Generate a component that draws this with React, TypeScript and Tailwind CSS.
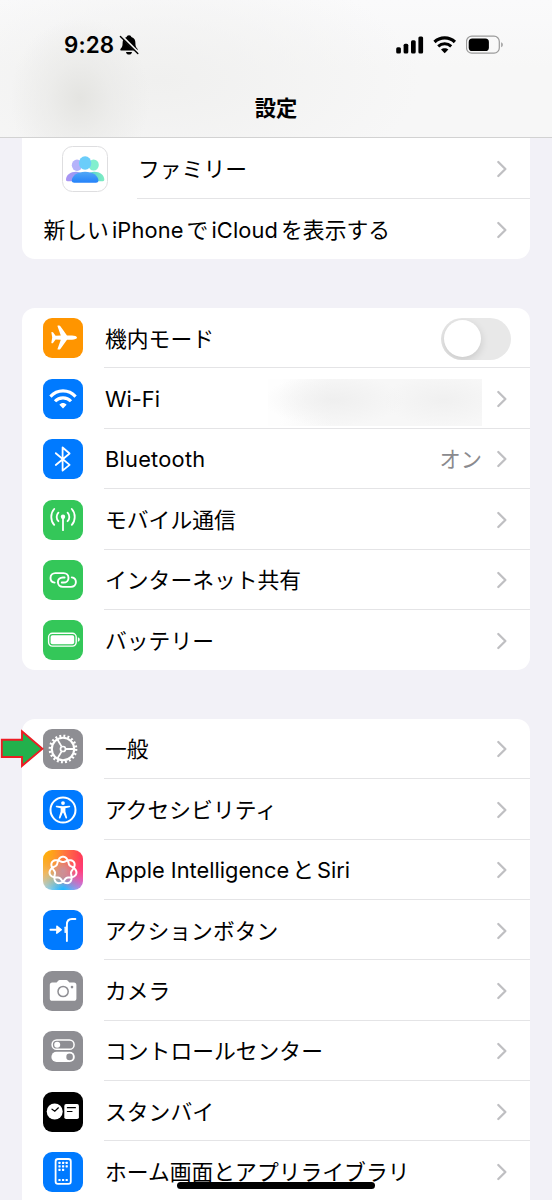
import type { ReactNode } from "react";

type Row = {
  label: ReactNode;
  bg?: string;
  icon?: ReactNode;
  right?: ReactNode;
};

// Rosette of seven interlaced petals, traced over two turns
const rosette = (cx: number, cy: number) => {
  const points: string[] = [];
  for (let i = 0; i < 280; i++) {
    const t = (i / 280) * Math.PI * 4;
    const r = 11 + 2.7 * Math.cos(3.5 * t);
    points.push(`${(cx + r * Math.sin(t)).toFixed(2)} ${(cy - r * Math.cos(t)).toFixed(2)}`);
  }
  return `M${points.join("L")}Z`;
};

const Chevron = () => (
  <svg className="w-[12px] h-[18px] shrink-0" viewBox="0 0 12 18" fill="none">
    <path d="M2.3 2L9.4 9L2.3 16" stroke="#bfbfc2" strokeWidth="2.3" strokeLinecap="round" strokeLinejoin="round" />
  </svg>
);

const Toggle = () => (
  <div className="w-[70px] h-[42px] -mr-[3px] rounded-full bg-[#e8e8e8] flex items-center pl-[2.5px] overflow-hidden">
    <div className="w-[37.5px] h-[37.5px] rounded-full bg-white shadow-[0_3px_8px_rgba(0,0,0,0.14)]" />
  </div>
);

const PlaneIcon = () => (
  <path
    fill="#fff"
    d="M34 19.6C34 18.2 31.5 17.5 29 17.5H24L17.4 8.3C17.1 7.9 16.6 7.6 16.1 7.6H15.1C14.6 7.6 14.4 8 14.6 8.5L17.8 17.5L12.6 17.8L10.2 14.5C10 14.1 9.6 13.9 9.2 13.9H8.8C8.4 13.9 8.3 14.2 8.4 14.6L9.2 19.6L8.4 24.6C8.3 25 8.4 25.3 8.8 25.3H9.2C9.6 25.3 10 25.1 10.2 24.7L12.6 21.4L17.8 21.7L14.6 30.7C14.4 31.2 14.6 31.6 15.1 31.6H16.1C16.6 31.6 17.1 31.3 17.4 30.9L24 21.7H29C31.5 21.7 34 21 34 19.6Z"
  />
);

const WifiIcon = () => (
  <g fill="none" stroke="#fff" strokeWidth="3.1">
    <path d="M7.4 17.6C14.3 10 25.7 10 32.6 17.6" />
    <path d="M12 22.2C16.3 17.7 23.7 17.7 28 22.2" />
    <path d="M16.4 25.7C18.4 23.5 21.6 23.5 23.6 25.7L20 29.6Z" fill="#fff" stroke="none" />
  </g>
);

const BluetoothIcon = () => (
  <path
    fill="none"
    stroke="#fff"
    strokeWidth="1.8"
    strokeLinejoin="round"
    strokeLinecap="round"
    d="M12.8 14.2L26.6 25.9L19.6 31.6V8.5L26.6 14.5L12.8 26"
  />
);

const AntennaIcon = () => (
  <g fill="none" stroke="#fff" strokeWidth="1.8" strokeLinecap="round">
    <path d="M20 17V30.2" />
    <circle cx="20" cy="16.8" r="2.2" fill="#fff" stroke="none" />
    <path d="M15.4 12.6C13.1 15 13.1 18.8 15.4 21.2M11.2 9C7.3 13.2 7.3 20.6 11.2 24.9" />
    <path d="M24.6 12.6C26.9 15 26.9 18.8 24.6 21.2M28.8 9C32.7 13.2 32.7 20.6 28.8 24.9" />
  </g>
);

const LinkIcon = () => (
  <g fill="none" stroke="#fff" strokeWidth="1.9" strokeLinecap="round">
    <path d="M11.6 22.6C8.8 22.2 7.5 20 7.5 17.9C7.5 15.2 9.6 13.1 12.4 13.1H20.6C23.4 13.1 25.5 15.2 25.5 17.9C25.5 20.6 23.4 22.5 20.6 22.5H18.8" />
    <path d="M28.8 17.4C31.6 17.8 32.9 20 32.9 22.1C32.9 24.8 30.8 26.9 28 26.9H19.8C17 26.9 14.9 24.8 14.9 22.1C14.9 19.4 17 17.5 19.8 17.5H21.6" />
  </g>
);

const BatteryIcon = () => (
  <g fill="#fff">
    <rect x="5.6" y="13.3" width="27.6" height="12.8" rx="3.8" fill="none" stroke="#fff" strokeWidth="1.4" />
    <rect x="7.6" y="15.2" width="23.6" height="9" rx="1.9" />
    <path d="M34.9 17.3C36.2 17.8 36.7 18.6 36.7 19.6C36.7 20.6 36.2 21.4 34.9 21.9Z" />
  </g>
);

const GearIcon = () => (
  <g fill="none" stroke="#fff">
    <circle cx="20" cy="20" r="13.1" strokeWidth="2.5" strokeDasharray="1.95 2.166" />
    <circle cx="20" cy="20" r="11.2" strokeWidth="2.1" />
    <circle cx="20" cy="20" r="2.5" strokeWidth="1.7" />
    <path d="M23 20H31.5M18.5 17.4L14.3 10.2M18.5 22.6L14.3 29.8" strokeWidth="1.8" />
  </g>
);

const AccessibilityIcon = () => (
  <g fill="#fff">
    <circle cx="20" cy="20" r="12.5" fill="none" stroke="#fff" strokeWidth="2" />
    <circle cx="20" cy="13.1" r="1.9" />
    <path d="M13.6 15.8C12.6 15.6 12.4 17 13.3 17.2L17.6 18.2V21.5L15.9 27.4C15.6 28.6 17.1 29 17.5 28L19.7 22.8H20.3L22.5 28C22.9 29 24.4 28.6 24.1 27.4L22.4 21.5V18.2L26.7 17.2C27.6 17 27.4 15.6 26.4 15.8C22 16.4 18 16.4 13.6 15.8Z" />
  </g>
);

const SiriIcon = () => (
  <path d={rosette(20, 20.4)} fill="none" stroke="#fff" strokeWidth="2" strokeLinejoin="round" />
);

const ActionIcon = () => (
  <g fill="none" stroke="#fff" strokeWidth="1.9" strokeLinecap="round">
    <path d="M7.4 19.7H14" />
    <path d="M13.8 16L18.4 19.7L13.8 23.4Z" fill="#fff" strokeWidth="1.2" strokeLinejoin="round" />
    <path d="M23.9 31V14.5C23.9 10.8 25.4 9 29 9H32.4" />
    <path d="M22.2 17.2V22.4" strokeWidth="1.4" />
  </g>
);

const CameraIcon = () => (
  <g>
    <path
      fill="#fff"
      d="M9.2 11.6H13.6L15 10C15.5 9.4 16 9.1 16.8 9.1H23.2C24 9.1 24.5 9.4 25 10L26.4 11.6H31C32.5 11.6 33.4 12.5 33.4 14V27.4C33.4 28.9 32.5 29.7 31 29.7H9.2C7.7 29.7 6.8 28.9 6.8 27.4V14C6.8 12.5 7.7 11.6 9.2 11.6Z"
    />
    <circle cx="20.1" cy="20.5" r="5.1" fill="none" stroke="#8e8e93" strokeWidth="1.5" />
    <circle cx="29" cy="16.1" r="1.3" fill="#8e8e93" />
  </g>
);

const ControlIcon = () => (
  <g>
    <rect x="9.1" y="9" width="22" height="9.3" rx="4.65" fill="none" stroke="#fff" strokeWidth="1.5" />
    <circle cx="14.2" cy="13.7" r="3" fill="#fff" />
    <rect x="8.4" y="20.8" width="23.4" height="10.2" rx="5.1" fill="#fff" />
    <circle cx="26.6" cy="25.9" r="3.3" fill="#8e8e93" />
  </g>
);

const StandbyIcon = () => (
  <g fill="#fff">
    <circle cx="11.7" cy="19.5" r="8" />
    <rect x="21.3" y="12.1" width="14.6" height="14.9" rx="1.8" />
    <path
      d="M9 17.2L11.8 19.2L15.4 15.8M24.4 15.7H32.4M24.4 19.5H29"
      fill="none"
      stroke="#000"
      strokeWidth="1.2"
      strokeLinecap="round"
    />
  </g>
);

const HomeIcon = () => (
  <g fill="#fff">
    <rect x="12.6" y="7" width="15.2" height="24.8" rx="2.4" fill="none" stroke="#fff" strokeWidth="1.8" />
    {[
      [16.5, 10.9], [20.1, 10.9], [23.7, 10.9],
      [16.5, 14.3], [20.1, 14.3], [23.7, 14.3],
      [16.5, 17.8], [20.1, 17.8],
      [16.5, 28], [20.1, 28], [23.7, 28],
    ].map(([x, y]) => (
      <rect key={`${x}-${y}`} x={x - 1.1} y={y - 1.1} width="2.2" height="2.2" rx="0.4" />
    ))}
  </g>
);

const FamilyIcon = () => (
  <svg className="w-[46px] h-[46px]" viewBox="0 0 46 46">
    <defs>
      <linearGradient id="famLeft" x1="0" y1="0" x2="1" y2="0">
        <stop offset="0" stopColor="#ab93f3" />
        <stop offset="1" stopColor="#8fa0f6" />
      </linearGradient>
      <linearGradient id="famRight" x1="0" y1="0" x2="1" y2="0">
        <stop offset="0" stopColor="#54cfd0" />
        <stop offset="1" stopColor="#7fedc2" />
      </linearGradient>
      <linearGradient id="famMid" x1="0" y1="0" x2="0" y2="1">
        <stop offset="0" stopColor="#52a8f6" />
        <stop offset="1" stopColor="#2482fa" />
      </linearGradient>
    </defs>
    <rect x="0.5" y="0.5" width="45" height="45" rx="10" fill="#fff" stroke="#dedee0" />
    <ellipse cx="15" cy="19.3" rx="5.2" ry="5.7" fill="#b5b3fa" />
    <ellipse cx="31.6" cy="19" rx="5.2" ry="5.5" fill="#82efce" />
    <path d="M4 33.6C4 29 8.5 25.8 14 25.8C17 25.8 19 27 20 28V35.3H5.5C4.4 35.3 4 34.6 4 33.6Z" fill="url(#famLeft)" />
    <path d="M42.3 33.6C42.3 29 37.8 25.8 32.3 25.8C29.3 25.8 27 27 26 28V35.3H40.8C41.9 35.3 42.3 34.6 42.3 33.6Z" fill="url(#famRight)" />
    <ellipse cx="23.1" cy="17" rx="6.2" ry="6.8" fill="#6bcdfa" />
    <path d="M9.8 34.6C9.8 29.6 15.6 25.7 23.1 25.7C30.6 25.7 36.4 29.6 36.4 34.6C36.4 36 35.3 36.8 34 36.8H12.2C10.9 36.8 9.8 36 9.8 34.6Z" fill="url(#famMid)" />
  </svg>
);

const network: Row[] = [
  { label: "機内モード", bg: "bg-[#ff9500]", icon: <PlaneIcon />, right: <Toggle /> },
  {
    label: "Wi-Fi",
    bg: "bg-[#007aff]",
    icon: <WifiIcon />,
    right: (
      <>
        <div className="w-[214px] h-[47px] mt-[7px] mr-[14px] bg-[radial-gradient(ellipse_70px_26px_at_66px_21px,#efefef_0%,#f3f3f300_100%),radial-gradient(ellipse_60px_26px_at_175px_21px,#f0f0f0_0%,#f3f3f300_100%),linear-gradient(to_right,#fefefe_5%,#f7f7f7_30%,#f7f7f7_100%)]" />
        <Chevron />
      </>
    ),
  },
  {
    label: <span className="tracking-[0.25px]">Bluetooth</span>,
    bg: "bg-[#007aff]",
    icon: <BluetoothIcon />,
    right: (
      <>
        <span className="text-[#8a8a8e] text-[21.2px] mr-[14px]">オン</span>
        <Chevron />
      </>
    ),
  },
  { label: "モバイル通信", bg: "bg-[#34c759]", icon: <AntennaIcon /> },
  { label: "インターネット共有", bg: "bg-[#34c759]", icon: <LinkIcon /> },
  { label: "バッテリー", bg: "bg-[#34c759]", icon: <BatteryIcon /> },
];

const general: Row[] = [
  { label: "一般", bg: "bg-[#8e8e93]", icon: <GearIcon /> },
  { label: "アクセシビリティ", bg: "bg-[#007aff]", icon: <AccessibilityIcon /> },
  {
    label: (
      <>
        Apple Intelligence<span className="mx-[3px]">と</span>Siri
      </>
    ),
    bg: "bg-[radial-gradient(circle_at_50%_52%,#c9909a_0%,#c9909a00_40%),radial-gradient(circle_at_0%_0%,#ffb300_0%,#ff9a3c00_75%),radial-gradient(circle_at_100%_0%,#ff2d55_0%,#ff3d7a_35%,#ff3d7a00_75%),radial-gradient(circle_at_50%_100%,#1fb6ff_0%,#5cc0f500_55%),radial-gradient(circle_at_100%_80%,#d77bff_0%,#d98cff00_60%),linear-gradient(#ff8a5c,#cfe0ee)]",
    icon: <SiriIcon />,
  },
  { label: "アクションボタン", bg: "bg-[#007aff]", icon: <ActionIcon /> },
  { label: "カメラ", bg: "bg-[#8e8e93]", icon: <CameraIcon /> },
  { label: "コントロールセンター", bg: "bg-[#8e8e93]", icon: <ControlIcon /> },
  { label: "スタンバイ", bg: "bg-black", icon: <StandbyIcon /> },
  { label: "ホーム画面とアプリライブラリ", bg: "bg-[#007aff]", icon: <HomeIcon /> },
];

const SettingsGroup = ({ rows, className = "" }: { rows: Row[]; className?: string }) => (
  <div className={`mx-[22px] bg-white rounded-[13px] overflow-hidden ${className}`}>
    {rows.map((row, idx) => (
      <div key={idx} className="flex items-center h-[60.4px] pl-[21.3px]">
        <div className={`w-10 h-10 mt-[0.6px] rounded-[9px] shrink-0 ${row.bg}`}>
          <svg className="w-10 h-10" viewBox="0 0 40 40">
            {row.icon}
          </svg>
        </div>
        <div
          className={`flex-1 flex items-center justify-between h-full ml-[20.7px] pt-[2px] pl-px pr-[22px] border-b ${
            idx === rows.length - 1 ? "border-transparent" : "border-[#e4e4e6]"
          }`}
        >
          <span className="whitespace-nowrap">{row.label}</span>
          <div className="flex items-center">{row.right ?? <Chevron />}</div>
        </div>
      </div>
    ))}
  </div>
);

const StatusBar = () => (
  <div className="flex items-center justify-between h-[24px] pl-[64px] pr-[48px]">
    <div className="flex items-center">
      <span className="text-[22.4px] leading-6 font-semibold w-[55px] tracking-[0.1px]">9:28</span>
      <svg className="w-5 h-[22px]" viewBox="0 0 20 22">
        <path d="M10 1.2C8.6 1.2 7.8 2 7.6 3.1C4.6 4 3.6 6.2 3.6 9C3.6 12 3.2 13 1.8 14.4C0.9 15.4 1.2 16.6 2.6 16.6H17.4C18.8 16.6 19.1 15.4 18.2 14.4C16.8 13 16.4 12 16.4 9C16.4 6.2 15.4 4 12.4 3.1C12.2 2 11.4 1.2 10 1.2Z" />
        <path d="M7 18H13C12.8 19.6 11.6 20.6 10 20.6C8.4 20.6 7.2 19.6 7 18Z" />
        <path d="M2.4 2L19.4 18.8" stroke="#f2f2f1" strokeWidth="2.8" />
        <path d="M1.4 2.4L18.8 19.6" stroke="#000" strokeWidth="1.4" strokeLinecap="round" />
      </svg>
    </div>
    <div className="flex items-center gap-[9px]">
      <svg className="w-[28px] h-[18px]" viewBox="0 0 28 18">
        <rect x="0.2" y="11.2" width="4.7" height="6.2" rx="1.5" />
        <rect x="7.6" y="7.8" width="4.7" height="9.6" rx="1.5" />
        <rect x="15" y="4.3" width="4.7" height="13.1" rx="1.5" />
        <rect x="22.4" y="0.4" width="4.7" height="17" rx="1.5" />
      </svg>
      <svg className="w-[24px] h-[18px]" viewBox="0 0 24 18" fill="none" stroke="#000">
        <path d="M1.5 6C7 0.6 16.4 0.6 21.9 6" strokeWidth="3.2" />
        <path d="M5.2 10.3C8.9 6.9 14.5 6.9 18.2 10.3" strokeWidth="3" />
        <path d="M8 13.5C10 11.7 13.4 11.7 15.4 13.5L11.7 17.3Z" fill="#000" stroke="none" />
      </svg>
      <svg className="w-[38px] h-[20px]" viewBox="0 0 38 20">
        <rect x="0.5" y="1.2" width="32.8" height="17" rx="5.3" fill="none" stroke="#9b9b9b" strokeWidth="1.2" />
        <rect x="2.7" y="3.4" width="20.2" height="12.6" rx="3.6" />
        <path d="M35.2 7.2C36.4 7.7 36.8 8.6 36.8 9.7C36.8 10.8 36.4 11.7 35.2 12.2Z" fill="#9b9b9b" />
      </svg>
    </div>
  </div>
);

const App = () => {
  return (
    <div className="relative w-[552px] h-[1200px] overflow-hidden bg-[#f2f1f7] text-black text-[21.8px] leading-8 tracking-[0px] font-[Inter,'Noto_Sans_CJK_JP',sans-serif]" lang="ja">
      <header className="h-[138px] pt-[33px] border-b border-[#d2d2d2] bg-[#f7f7f7] bg-[radial-gradient(ellipse_70px_80px_at_80px_98px,#e4e4e1_0%,#e9e9e7aa_45%,#f2f2f100_100%),radial-gradient(ellipse_260px_120px_at_160px_80px,#f0f0ef_0%,#f7f7f700_100%),linear-gradient(#fafafb,#f7f7f7_50%)]">
        <StatusBar />
        <h1 className="mt-[35px] text-center text-[21.3px] leading-8 font-bold">設定</h1>
      </header>

      <div className="mx-[22px] bg-white rounded-b-[13px]">
        <div className="flex items-center h-[61px] pl-[40px]">
          <FamilyIcon />
          <div className="flex-1 flex items-center justify-between h-full ml-[29px] pt-[2px] pl-px pr-[22px] border-b border-[#e4e4e6]">
            <span>ファミリー</span>
            <Chevron />
          </div>
        </div>
        <div className="flex items-center justify-between h-[60.3px] pt-[2px] pl-[21.5px] pr-[22px]">
          <span>
            新しい<span className="ml-[3px] tracking-[0.15px]">iPhone</span>
            <span className="mx-[3px]">で</span>
            <span className="tracking-[0.15px]">iCloud</span>
            <span className="ml-[3px]">を表示する</span>
          </span>
          <Chevron />
        </div>
      </div>

      <div className="mt-[48.7px]">
        <SettingsGroup rows={network} />
      </div>
      <div className="mt-[48.4px]">
        <SettingsGroup rows={general} className="pb-10" />
      </div>

      {/* pointer to the general row */}
      <svg className="absolute left-0 top-[728px] w-[46px] h-[42px]" viewBox="0 0 46 42">
        <path d="M1.8 11.8H22V3.2L42.4 20.7L22 37.9V29H1.8Z" fill="#22b14c" stroke="#ed1c24" strokeWidth="1.9" />
      </svg>

      {/* home indicator */}
      <div className="absolute left-[177px] top-[1182px] w-[198px] h-[7px] rounded-full bg-black" />
    </div>
  );
};

export default App;
